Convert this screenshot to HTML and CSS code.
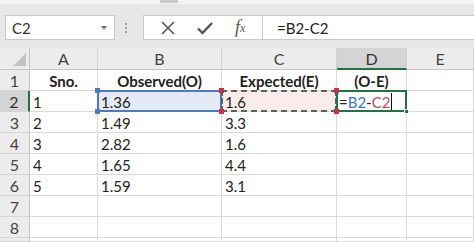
FILE: index.html
```html
<!DOCTYPE html>
<html lang="en">
<head>
    <meta charset="UTF-8">
    <meta name="viewport" content="width=device-width, initial-scale=1.0">
    <title>Sheet1 - O-E</title>
    <link rel="stylesheet" href="styles.css">
</head>
<body>
    <div class="topstrip"><div class="tab"></div></div>

    <div class="toolbar">
        <div class="namebox">
            <span>C2</span>
            <span class="arrow"></span>
        </div>
        <div class="grip"><i></i><i></i><i></i></div>
        <div class="fbar">
            <div class="fbtns">
                <svg class="ico" width="14" height="14" viewBox="0 0 14 14">
                    <path d="M1 1 L13 13 M13 1 L1 13" stroke="#555" stroke-width="1.6" fill="none"/>
                </svg>
                <svg class="ico" width="16" height="14" viewBox="0 0 16 14">
                    <path d="M1 7.5 L5.5 12 L15 2" stroke="#555" stroke-width="2.4" fill="none"/>
                </svg>
                <span class="fx">f<sub>x</sub></span>
            </div>
            <div class="formula">=B2-C2</div>
        </div>
    </div>

    <div class="sheet">
        <!-- column headers -->
        <div class="corner"><span class="tri"></span></div>
        <div class="colhead">A</div>
        <div class="colhead">B</div>
        <div class="colhead">C</div>
        <div class="colhead active">D</div>
        <div class="colhead">E</div>

        <!-- row 1 -->
        <div class="rowhead">1</div>
        <div class="cell bold center">Sno.</div>
        <div class="cell bold center">Observed(O)</div>
        <div class="cell bold center">Expected(E)</div>
        <div class="cell bold center">(O-E)</div>
        <div class="cell"></div>

        <!-- row 2 -->
        <div class="rowhead active">2</div>
        <div class="cell">1</div>
        <div class="cell sel-blue">1.36
            <span class="h blue tl"></span><span class="h blue bl"></span>
        </div>
        <div class="cell sel-red">1.6
            <span class="h red tl"></span><span class="h red bl"></span>
            <span class="h red tr"></span><span class="h red br"></span>
        </div>
        <div class="cell editing"><span class="op">=</span><span class="ref-b">B2</span><span class="op">-</span><span class="ref-c">C2</span><span class="caret"></span>
            <span class="fill"></span>
        </div>
        <div class="cell"></div>

        <!-- row 3 -->
        <div class="rowhead">3</div>
        <div class="cell">2</div>
        <div class="cell">1.49</div>
        <div class="cell">3.3</div>
        <div class="cell"></div>
        <div class="cell"></div>

        <!-- row 4 -->
        <div class="rowhead">4</div>
        <div class="cell">3</div>
        <div class="cell">2.82</div>
        <div class="cell">1.6</div>
        <div class="cell"></div>
        <div class="cell"></div>

        <!-- row 5 -->
        <div class="rowhead">5</div>
        <div class="cell">4</div>
        <div class="cell">1.65</div>
        <div class="cell">4.4</div>
        <div class="cell"></div>
        <div class="cell"></div>

        <!-- row 6 -->
        <div class="rowhead">6</div>
        <div class="cell">5</div>
        <div class="cell">1.59</div>
        <div class="cell">3.1</div>
        <div class="cell"></div>
        <div class="cell"></div>

        <!-- row 7 -->
        <div class="rowhead">7</div>
        <div class="cell"></div>
        <div class="cell"></div>
        <div class="cell"></div>
        <div class="cell"></div>
        <div class="cell"></div>

        <!-- row 8 -->
        <div class="rowhead">8</div>
        <div class="cell"></div>
        <div class="cell"></div>
        <div class="cell"></div>
        <div class="cell"></div>
        <div class="cell"></div>

        <!-- row 9, only its top edge shows -->
        <div class="rowhead"></div>
        <div class="cell"></div>
        <div class="cell"></div>
        <div class="cell"></div>
        <div class="cell"></div>
        <div class="cell"></div>
    </div>
</body>
</html>
```

FILE: styles.css
```css
body {
    margin: 0;
    width: 474px;
    height: 242px;
    overflow: hidden;
    background: #fff;
    font-family: Lato, "Open Sans", sans-serif;
    color: #222;
}
.topstrip {
    height: 4px;
    background: #f4f4f4;
    padding-left: 160px;
}
.tab {
    width: 18px;
    height: 3px;
    background: #c9c9c9;
}
.toolbar {
    height: 44px;
    box-sizing: border-box;
    background: #e7e7e7;
    display: flex;
    align-items: flex-start;
    padding: 11px 0 0 5px;
}
.namebox {
    width: 110px;
    height: 25px;
    box-sizing: border-box;
    background: #fff;
    border: 1px solid #c8c8c8;
    display: flex;
    align-items: center;
    justify-content: space-between;
    padding: 0 7px 0 6px;
    font-size: 15px;
    color: #333;
}
.arrow {
    width: 0;
    height: 0;
    border-left: 3.5px solid transparent;
    border-right: 3.5px solid transparent;
    border-top: 4px solid #777;
}
.grip {
    width: 4px;
    margin: 8px 0 0 10px;
    display: flex;
    flex-direction: column;
    gap: 2px;
}
.grip i {
    display: block;
    width: 2px;
    height: 2px;
    background: #9a9a9a;
}
.fbar {
    flex: 1;
    height: 25px;
    margin-left: 14px;
    box-sizing: border-box;
    background: #fff;
    border: 1px solid #c8c8c8;
    border-right: none;
    display: flex;
    align-items: center;
}
.fbtns {
    width: 119px;
    height: 100%;
    box-sizing: border-box;
    border-right: 1px solid #c8c8c8;
    display: flex;
    align-items: center;
    padding-left: 17px;
    gap: 22px;
}
.fx {
    font-family: "Liberation Serif", serif;
    font-style: italic;
    font-size: 18px;
    color: #555;
}
.fx sub {
    font-size: 12px;
    vertical-align: 1px;
}
.formula {
    padding-left: 14px;
    font-size: 15px;
    color: #222;
}
.sheet {
    display: grid;
    grid-template-columns: 30px 68px 124px 115px 70px 1fr;
    grid-template-rows: 22px repeat(8, 21px) 4px;
    overflow: hidden;
}
.corner,
.colhead,
.rowhead {
    background: #ececec;
    box-sizing: border-box;
    color: #444;
    font-size: 16px;
    display: flex;
    align-items: center;
    justify-content: center;
}
.corner {
    border-right: 1px solid #c6c6c6;
    border-bottom: 1px solid #c6c6c6;
    align-items: flex-end;
    justify-content: flex-end;
    padding: 0 3px 3px 0;
}
.tri {
    width: 0;
    height: 0;
    border-left: 13px solid transparent;
    border-bottom: 13px solid #c2c2c2;
}
.colhead {
    border-right: 1px solid #d0d0d0;
    border-bottom: 1px solid #c6c6c6;
}
.colhead.active {
    background: #d4d4d4;
    border-bottom: 2px solid #217346;
    color: #333;
}
.rowhead {
    border-right: 1px solid #c6c6c6;
    border-bottom: 1px solid #d6d6d6;
}
.rowhead.active {
    background: #d4d4d4;
    border-right: 2px solid #217346;
    color: #333;
}
.cell {
    position: relative;
    box-sizing: border-box;
    border-right: 1px solid #dadada;
    border-bottom: 1px solid #dadada;
    font-size: 15px;
    display: flex;
    align-items: center;
    padding: 1px 0 0 3px;
    white-space: nowrap;
}
.cell.bold {
    font-weight: bold;
}
.cell.center {
    justify-content: center;
    padding-left: 0;
}
.sel-blue {
    background: #e4ebf6;
}
.sel-blue::before {
    content: "";
    position: absolute;
    top: -1px;
    left: -1px;
    right: -1px;
    bottom: -1px;
    border: 2px solid #4c79c4;
    z-index: 2;
}
.sel-red {
    background: #fbecec;
}
.sel-red::before {
    content: "";
    position: absolute;
    top: -1px;
    left: -1px;
    right: -1px;
    bottom: -1px;
    border: 2px dashed #5a6355;
    z-index: 3;
}
.editing {
    padding-left: 2px;
}
.editing::before {
    content: "";
    position: absolute;
    top: -1px;
    left: -1px;
    right: -1px;
    bottom: -1px;
    border: 2px solid #217346;
    z-index: 3;
}
.op {
    color: #222;
}
.ref-b {
    color: #4472c4;
}
.ref-c {
    color: #b2505a;
}
.caret {
    display: inline-block;
    width: 1px;
    height: 17px;
    background: #111;
    margin-left: 1px;
}
.h {
    position: absolute;
    width: 5px;
    height: 5px;
    z-index: 4;
}
.h.blue {
    background: #4c79c4;
}
.h.red {
    background: #c8304c;
}
.tl { top: -3px; left: -3px; }
.bl { bottom: -3px; left: -3px; }
.tr { top: -3px; right: -3px; }
.br { bottom: -3px; right: -3px; }
.fill {
    position: absolute;
    right: -3px;
    bottom: -3px;
    width: 5px;
    height: 5px;
    background: #217346;
    border: 1px solid #fff;
    box-sizing: border-box;
    z-index: 5;
}
```
